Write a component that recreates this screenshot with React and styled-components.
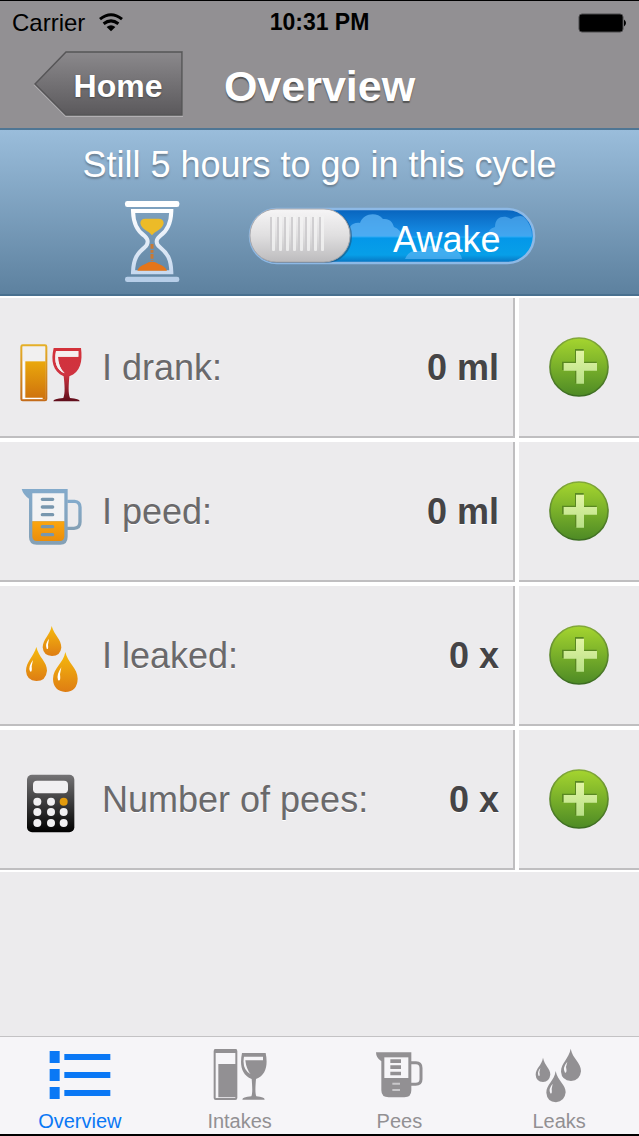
import React, { useState } from "react";
import styled, { createGlobalStyle } from "styled-components";

const GlobalStyle = createGlobalStyle`
  * { box-sizing: border-box; }
  body {
    margin: 0;
    background: #ecebed;
    font-family: "Liberation Sans", Arial, Helvetica, sans-serif;
  }
  button { font: inherit; border: 0; padding: 0; background: none; cursor: pointer; }
  svg { display: block; overflow: visible; }
`;

const Screen = styled.div`
  min-height: 100vh;
  display: flex;
  flex-direction: column;
  border-top: 1px solid #000;
  border-bottom: 2px solid #000;
`;

const StatusBar = styled.div`
  display: grid;
  grid-template-columns: 1fr auto 1fr;
  align-items: center;
  height: 43px;
  padding: 0 12px;
  background: #929093;
  color: #000;
  font-size: 24px;
`;

const Carrier = styled.div`
  display: flex;
  align-items: center;
  gap: 14px;
`;

const Clock = styled.div`
  font-size: 23px;
  font-weight: bold;
`;

const Battery = styled.div`
  display: flex;
  justify-content: flex-end;
`;

const NavBar = styled.header`
  display: grid;
  grid-template-columns: 1fr auto 1fr;
  align-items: center;
  height: 84px;
  padding: 0 34px;
  background: #929093;
`;

const BackButton = styled.button`
  position: relative;
  width: 150px;
  height: 66px;
  margin-bottom: 4px;
  padding: 4px 0 0 18px;
  color: #fff;
  font-size: 32px;
  font-weight: bold;
  text-shadow: 0 1px 2px #444;
  svg { position: absolute; inset: 0; }
  span { position: relative; }
`;

const Title = styled.h1`
  margin: 0;
  color: #fff;
  font-size: 43px;
  line-height: 50px;
  text-shadow: 0 2px 1px #555;
`;

const CyclePanel = styled.section`
  height: 168px;
  padding-top: 14px;
  border-top: 2px solid #4f7694;
  border-bottom: 2px solid #49708f;
  background: linear-gradient(#9abddb, #5d819f);
`;

const CycleText = styled.p`
  margin: 0;
  color: #fff;
  font-size: 36px;
  line-height: 42px;
  text-align: center;
  text-shadow: 0 2px 2px #6a7f92;
`;

const CycleRow = styled.div`
  display: flex;
  justify-content: center;
  align-items: flex-start;
  gap: 68px;
  padding: 14px 0 0 20px;
`;

const Switch = styled.label`
  position: relative;
  display: block;
  width: 288px;
  height: 60px;
  margin-top: 7px;
  cursor: pointer;
  input { position: absolute; inset: 0; margin: 0; opacity: 0; }
  svg { position: absolute; inset: 0; }
`;

const SwitchText = styled.span`
  position: relative;
  display: block;
  padding-right: 35px;
  color: #fff;
  font-size: 36px;
  line-height: 66px;
  text-align: right;
`;

const List = styled.main`
  display: grid;
  gap: 4px;
  padding: 2px 0;
  background: #fff;
`;

const Row = styled.div`
  display: grid;
  grid-template-columns: 1fr 120px;
  gap: 4px;
  height: 140px;
`;

const Entry = styled.div`
  display: flex;
  align-items: center;
  gap: 18px;
  padding: 2px 14px 0 20px;
  border-right: 2px solid #bfbec0;
  border-bottom: 2px solid #bfbec0;
  background: #ecebed;
  font-size: 36px;
`;

const EntryName = styled.span`
  flex: 1;
  color: #6a696b;
  text-shadow: 0 1px 0 #fff;
`;

const EntryValue = styled.span`
  color: #454446;
  font-weight: bold;
  text-shadow: 0 1px 0 #fff;
`;

const AddButton = styled.button`
  display: flex;
  align-items: center;
  justify-content: center;
  border-bottom: 2px solid #bfbec0;
  background: #ecebed;
`;

const TabBar = styled.nav`
  display: grid;
  grid-template-columns: repeat(4, 1fr);
  height: 98px;
  margin-top: auto;
  border-top: 1px solid #c3c2c4;
  background: #f6f5f8;
`;

const Tab = styled.a`
  display: flex;
  flex-direction: column;
  align-items: center;
  gap: 6px;
  padding-top: 10px;
  color: ${(p) => (p.$active ? "#0a78f5" : "#929093")};
  font-size: 20px;
  line-height: 24px;
  text-decoration: none;
`;

const Gradient = ({ id, from, to }) => (
  <linearGradient id={id} x1="0" y1="0" x2="0" y2="1">
    <stop offset="0" stopColor={from} />
    <stop offset="1" stopColor={to} />
  </linearGradient>
);

const WifiIcon = () => (
  <svg width="24" height="18" viewBox="0 0 24 18" fill="none" stroke="#000" strokeWidth="3">
    <path d="M1 5.2Q12-3.6 23 5.2M4.6 9.8Q12 4 19.4 9.8" />
    <path d="M12 17.2 7.6 13Q12 9.6 16.4 13Z" fill="#000" stroke="none" />
  </svg>
);

const BatteryIcon = () => (
  <svg width="49" height="20" viewBox="0 0 49 20">
    <rect x="1" y="1" width="44" height="18" rx="3" fill="#000" stroke="#4b4a4c" />
    <path d="M46 6.5q4 3.500 0 7z" fill="#000" />
  </svg>
);

const BackShape = () => (
  <svg width="150" height="66" viewBox="0 0 150 66">
    <defs><Gradient id="back" from="#8b898c" to="#5b595c" /></defs>
    <path d="M1 34 32 2H148V65H32Z" fill="none" stroke="#b2b0b3" strokeWidth="2" />
    <path d="M1 33 32 1H148V64H32Z" fill="url(#back)" stroke="#565557" strokeWidth="1.5" />
  </svg>
);

const Hourglass = () => (
  <svg width="56" height="83" viewBox="192 210 168 249">
    <defs>
      <linearGradient id="glass" x1="0" y1="240" x2="0" y2="430" gradientUnits="userSpaceOnUse">
        <stop offset="0" stopColor="#fff" /><stop offset="1" stopColor="#c7d9ef" />
      </linearGradient>
    </defs>
    <rect x="195" y="213" width="163" height="18" rx="7" fill="#fff" />
    <rect x="195" y="440" width="163" height="16" rx="7" fill="#b7cee8" />
    <path d="M219 243H334C333 282 321 304 300 318Q280 335 300 352C322 370 333 386 334 427H219C220 386 232 370 254 352Q272 335 254 318C232 304 220 282 219 243Z" fill="none" stroke="url(#glass)" strokeWidth="12" />
    <path d="M241 280Q241 266 256 266H296Q311 266 311 280C307 300 286 302 276 316C266 302 245 300 241 280Z" fill="#ecbb28" />
    <path d="M276 342V392" stroke="#c97a35" strokeWidth="9" strokeDasharray="14 4 8 4" />
    <path d="M232 422Q237 408 256 402Q276 388 296 402Q315 408 321 422Z" fill="#e4751a" />
  </svg>
);

const ridges = [24, 31, 38, 45, 52, 59, 66, 73];

const SwitchArt = () => (
  <svg width="288" height="60" viewBox="0 0 288 60">
    <defs>
      <linearGradient id="sky" x1="0" y1="0" x2="0" y2="1">
        <stop offset="0" stopColor="#0863bd" />
        <stop offset=".5" stopColor="#1790e8" />
        <stop offset=".51" stopColor="#0397e9" />
        <stop offset=".85" stopColor="#079fe8" />
        <stop offset="1" stopColor="#0870bd" />
      </linearGradient>
      <linearGradient id="knob" x1="0" y1="0" x2="0" y2="1">
        <stop offset="0" stopColor="#f6f5f6" />
        <stop offset=".5" stopColor="#e0dfe0" />
        <stop offset="1" stopColor="#bcbbbd" />
      </linearGradient>
      <clipPath id="track"><rect x="3" y="3" width="281" height="52" rx="26" /></clipPath>
    </defs>
    <rect x="2" y="2" width="284" height="54" rx="27" fill="url(#sky)" stroke="#8db9e6" strokeWidth="2.5" />
    <g clipPath="url(#track)" fill="#5fb6f5">
      <path d="M98 30C100 20 104 15 112 16C115 7 128 4 135 12C143 11 145 17 146 20Q153 22 153 30Z" opacity=".75" />
      <path d="M240 30Q239 22 247 20C247 9 257 8 263 12Q272 5 288 14V30Z" opacity=".6" />
      <path d="M157 52Q161 42 172 44Q184 34 197 43Q212 40 214 52Z" opacity=".65" />
      <path d="M100 29H286V31H100Z" fill="#29a7f5" opacity=".5" />
    </g>
    <rect x="3" y="3" width="101" height="53" rx="26" fill="#244d70" opacity=".55" />
    <rect x="2" y="2" width="100" height="53" rx="26" fill="url(#knob)" stroke="#a9a8ab" />
    {ridges.map((x) => (
      <g key={x}>
        <rect x={x - 2} y="10" width="2" height="34" fill="#c9c8ca" opacity=".8" />
        <rect x={x} y="9" width="3" height="35" rx="1" fill="#f2f2f2" opacity=".8" />
      </g>
    ))}
  </svg>
);

const RowIcon = ({ top, children }) => (
  <svg width="64" height="70" viewBox={`60 ${top} 192 210`} aria-hidden="true">{children}</svg>
);

const DrinkIcon = () => (
  <RowIcon top={9}>
    <defs>
      <Gradient id="juice" from="#eaa80c" to="#ce710d" />
      <Gradient id="rim" from="#e5af28" to="#c46c1a" />
      <linearGradient id="wine" x1="0" y1="0" x2="0" y2="1">
        <stop offset="0" stopColor="#d3313a" />
        <stop offset=".5" stopColor="#cf3340" />
        <stop offset="1" stopColor="#5e0d1b" />
      </linearGradient>
    </defs>
    <rect x="64" y="46" width="75" height="165" rx="4" fill="#f1f0f0" stroke="url(#rim)" strokeWidth="6" />
    <path d="M76 94H137V208H76Z" fill="url(#juice)" />
    <path d="M71 94V205H128" fill="none" stroke="#fff" strokeWidth="4" />
    <path fillRule="evenodd" fill="url(#wine)" d="M161 54H243C248 94 242 126 208 139C206 166 204 190 210 204Q239 206 239 214H160Q160 206 190 204C196 190 194 166 191 139C158 124 152 92 161 54ZM168 63Q158 115 194 130Q174 109 174 80H235V63Z" />
    <path d="M168 63H235V80H174Q174 109 194 130Q158 115 168 63Z" fill="#f5eeee" />
  </RowIcon>
);

const JugIcon = () => (
  <RowIcon top={21}>
    <defs><Gradient id="jug" from="#83aacb" to="#84a0b5" /><Gradient id="fill" from="#fca60d" to="#ea8d0b" /></defs>
    <path d="M202 94H224Q240 95 240 112V156Q240 174 222 175H200" fill="none" stroke="url(#jug)" strokeWidth="10" />
    <path d="M65 57H203V200Q203 224 181 224H110Q87 224 87 201V86Q70 75 65 57Z" fill="url(#jug)" />
    <path d="M97 70H193V154H97Z" fill="#f3f3f4" />
    <path d="M97 154H193V199Q193 213 179 213H111Q97 213 97 199Z" fill="url(#fill)" />
    <path d="M127 88H158M127 111H158M127 134H158M127 170H158M127 194H158" stroke="#7897ae" strokeWidth="10" strokeLinecap="round" />
  </RowIcon>
);

const DropsIcon = () => (
  <RowIcon top={18}>
    <defs><Gradient id="drop" from="#f6bb0d" to="#de7d13" /></defs>
    <g fill="url(#drop)">
      <path d="M155 33C163 61 184 73 184 98Q181 123 156 123Q130 122 128 97C129 72 150 60 155 33Z" />
      <path d="M109 96C116 127 141 140 141 167Q138 198 109 198Q80 197 78 168C78 140 102 124 109 96Z" />
      <path d="M196 111C203 144 233 159 233 191Q232 229 196 231Q160 228 159 192C160 158 190 145 196 111Z" />
    </g>
    <g fill="#fff">
      <path d="M147 71Q134 87 140 101Q146 106 144 89Z" />
      <path d="M99 135Q83 157 90 169Q97 175 95 154Z" />
      <path d="M184 157Q168 181 174 195Q183 202 180 178Z" />
    </g>
  </RowIcon>
);

const CalculatorIcon = () => (
  <RowIcon top={30}>
    <defs><Gradient id="calc" from="#747375" to="#000" /></defs>
    <rect x="81" y="59" width="142" height="173" rx="15" fill="url(#calc)" />
    <rect x="99" y="77" width="105" height="38" rx="12" fill="#f1f0f2" />
    {[140, 171, 204].map((y) =>
      [112, 153, 191].map((x) => (
        <circle key={`${x}-${y}`} cx={x} cy={y} r="12" fill={x === 191 && y === 140 ? "#e39b0d" : "#f1f0f2"} />
      ))
    )}
  </RowIcon>
);

const PlusIcon = () => (
  <svg width="60" height="60" viewBox="207 142 180 180" aria-hidden="true">
    <defs><Gradient id="green" from="#a5d52f" to="#4d8a25" /><Gradient id="greenEdge" from="#82a83a" to="#3b6c21" /><Gradient id="plus" from="#e2f5a4" to="#b9e088" /></defs>
    <circle cx="297" cy="232" r="87" fill="url(#green)" stroke="url(#greenEdge)" strokeWidth="5" />
    <path d="M285 178H311V216H350V241H311V280H285V241H246V216H285Z" fill="#598821" />
    <path d="M288 183H312V220H351V243H312V282H289V243H251V220H288Z" fill="url(#plus)" />
  </svg>
);

const TabSvg = ({ left, children }) => (
  <svg width="62" height="56" viewBox={`${left} 51 186 168`} fill="currentColor" aria-hidden="true">{children}</svg>
);

const OverviewTabIcon = () => (
  <TabSvg left={147}>
    <path d="M149 63H179V99H149ZM149 117H179V153H149ZM149 171H179V207H149ZM193 72H331V90H193ZM193 126H331V144H193ZM193 180H331V198H193Z" />
  </TabSvg>
);

const IntakesTabIcon = () => (
  <TabSvg left={626}>
    <rect x="643" y="60" width="65" height="147" rx="3" fill="none" stroke="currentColor" strokeWidth="6" />
    <path d="M643 57H708V69H643ZM654 102H708V202H654Z" />
    <path fillRule="evenodd" d="M725 69H796C803 103 798 135 767 147C765 170 764 190 768 199Q793 201 793 209H726Q726 201 753 199C757 190 756 170 754 147C722 134 718 103 725 69ZM731 80Q724 118 751 133Q738 118 735 91H788V80Z" />
  </TabSvg>
);

const PeesTabIcon = () => (
  <TabSvg left={144}>
    <path d="M272 98H288Q303 98 303 114V148Q303 163 287 163H272" fill="none" stroke="currentColor" strokeWidth="9" />
    <path d="M168 67H274V181Q274 202 253 202H206Q184 202 184 181V94Q168 84 168 67Z" />
    <path d="M193 82H265V144H193Z" fill="#f6f5f8" />
    <path d="M211 88H243V99H211ZM211 106H243V117H211ZM211 125H243V136H211Z" />
    <path d="M217 161H240M217 180H240" stroke="#c9c8cb" strokeWidth="6" />
  </TabSvg>
);

const LeaksTabIcon = () => (
  <TabSvg left={623}>
    <path d="M668 83C673 108 690 114 690 134Q687 155 668 156Q647 154 646 134C646 114 664 107 668 83Z" />
    <path d="M751 56C757 87 782 97 782 124Q779 152 752 153Q724 151 722 125C722 98 746 86 751 56Z" />
    <path d="M706 123C712 153 736 163 736 187Q733 215 707 217Q680 215 678 188C678 163 702 153 706 123Z" />
    <g fill="#f6f5f8">
      <path d="M660 114Q649 127 655 138Q660 140 657 127Z" />
      <path d="M741 95Q725 114 734 128Q741 130 737 111Z" />
      <path d="M697 161Q683 177 690 190Q696 194 694 177Z" />
    </g>
  </TabSvg>
);

const entries = [
  { name: "I drank:", value: "0 ml", Icon: DrinkIcon },
  { name: "I peed:", value: "0 ml", Icon: JugIcon },
  { name: "I leaked:", value: "0 x", Icon: DropsIcon },
  { name: "Number of pees:", value: "0 x", Icon: CalculatorIcon },
];

const tabs = [
  { name: "Overview", Icon: OverviewTabIcon },
  { name: "Intakes", Icon: IntakesTabIcon },
  { name: "Pees", Icon: PeesTabIcon },
  { name: "Leaks", Icon: LeaksTabIcon },
];

export default function App() {
  const [awake, setAwake] = useState(true);
  return (
    <>
      <GlobalStyle />
      <Screen>
        <StatusBar>
          <Carrier>Carrier<WifiIcon /></Carrier>
          <Clock>10:31 PM</Clock>
          <Battery><BatteryIcon /></Battery>
        </StatusBar>
        <NavBar>
          <BackButton type="button"><BackShape /><span>Home</span></BackButton>
          <Title>Overview</Title>
        </NavBar>
        <CyclePanel>
          <CycleText>Still 5 hours to go in this cycle</CycleText>
          <CycleRow>
            <Hourglass />
            <Switch>
              <input type="checkbox" role="switch" checked={awake} onChange={(e) => setAwake(e.target.checked)} />
              <SwitchArt />
              <SwitchText>Awake</SwitchText>
            </Switch>
          </CycleRow>
        </CyclePanel>
        <List>
          {entries.map(({ name, value, Icon }) => (
            <Row key={name}>
              <Entry>
                <Icon />
                <EntryName>{name}</EntryName>
                <EntryValue>{value}</EntryValue>
              </Entry>
              <AddButton type="button" aria-label={`Add: ${name}`}><PlusIcon /></AddButton>
            </Row>
          ))}
        </List>
        <TabBar>
          {tabs.map(({ name, Icon }, i) => (
            <Tab key={name} href={`#${name.toLowerCase()}`} $active={i === 0}>
              <Icon />
              {name}
            </Tab>
          ))}
        </TabBar>
      </Screen>
    </>
  );
}
